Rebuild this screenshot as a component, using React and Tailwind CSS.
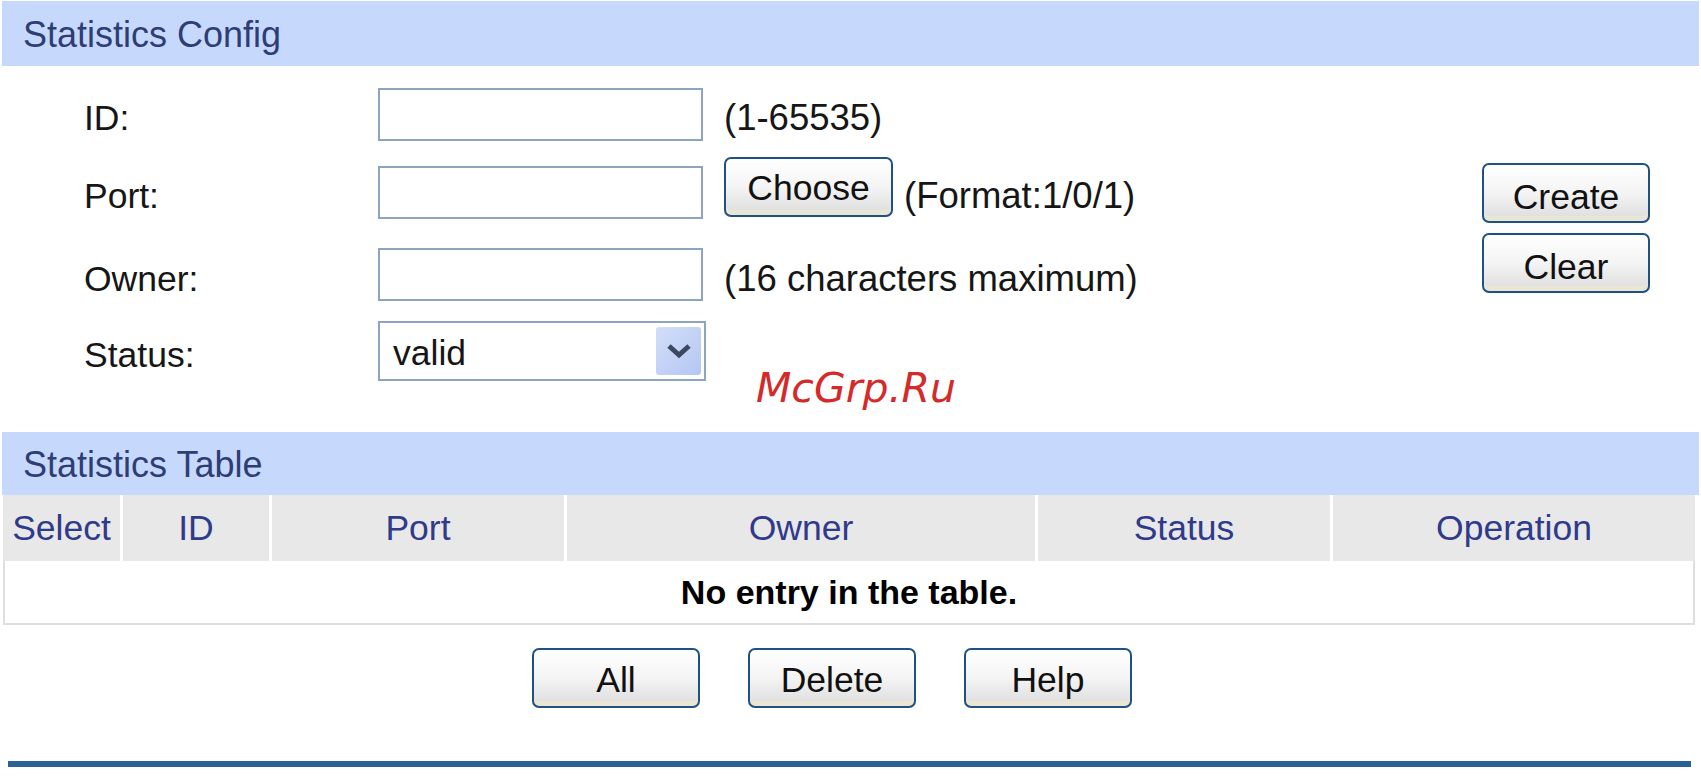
import React from "react";

const columns = [
  { name: "Select", w: "w-[120px]" },
  { name: "ID", w: "w-[149px]" },
  { name: "Port", w: "w-[295px]" },
  { name: "Owner", w: "w-[471px]" },
  { name: "Status", w: "w-[295px]" },
  { name: "Operation", w: "flex-1" },
];

// old-style web UI button with the dark blue rounded frame
function Btn({ children, className = "" }) {
  return (
    <button
      className={`h-[60px] w-[168px] rounded-[7px] border-2 border-[#1f5283] bg-linear-to-b from-white via-[#f4f4f4] to-[#dcdcdc] text-[35.5px] leading-[40px] text-[#111] shadow-[inset_0_-5px_0_#e9e6d6] ${className}`}
    >
      {children}
    </button>
  );
}

function TextInput({ className = "" }) {
  return <input type="text" className={`h-[53px] w-[325px] border-2 border-[#8da3be] bg-white outline-none ${className}`} />;
}

function SectionHeader({ title, className = "" }) {
  return (
    <div className={`mx-[2px] flex items-center bg-[#c6d9fd] pl-[21px] text-[36px] text-[#2f3d75] ${className}`}>
      {title}
    </div>
  );
}

export default function App() {
  return (
    <div className="relative min-h-screen w-[1701px] bg-white pt-px font-['Liberation_Sans',Arial,sans-serif] text-[35.5px] leading-[40px] text-[#161616]">
      <SectionHeader title="Statistics Config" className="h-[65px] pt-[2px]" />

      {/* Config form */}
      <div className="flex">
        <div className="flex flex-col">
          <div className="mt-[22px] flex h-[53px] items-center">
            <div className="w-[378px] pl-[84px] pt-[6px]">ID:</div>
            <TextInput />
            <div className="ml-[21px] pt-[6px] text-[36.5px]">(1-65535)</div>
          </div>

          <div className="mt-[16px] flex h-[60px] items-start">
            <div className="mt-[19px] w-[378px] pl-[84px]">Port:</div>
            <TextInput className="mt-[9px]" />
            <Btn className="ml-[21px] w-[169px] pt-[2px]">Choose</Btn>
            <div className="ml-[11px] mt-[19px] text-[36.5px]">(Format:1/0/1)</div>
          </div>

          <div className="mt-[31px] flex h-[53px] items-center">
            <div className="w-[378px] pl-[84px] pt-[8px]">Owner:</div>
            <TextInput />
            <div className="ml-[21px] pt-[8px] text-[36.5px]">(16 characters maximum)</div>
          </div>

          <div className="mt-[20px] flex h-[60px] items-center">
            <div className="w-[378px] pl-[84px] pt-[7px]">Status:</div>
            <div className="flex h-[60px] w-[328px] items-center justify-between border-2 border-[#8da3be] bg-white pl-[13px] pr-[3px]">
              <span className="pt-[4px]">valid</span>
              <div className="flex h-[48px] w-[45px] items-center justify-center rounded-[3px] bg-linear-to-br from-[#d3def8] to-[#b4c7f3]">
                <svg width="26" height="18" viewBox="0 0 26 18">
                  <polyline points="3,4 13,13 23,4" fill="none" stroke="#3b4763" strokeWidth="5" />
                </svg>
              </div>
            </div>
          </div>
        </div>

        <div className="ml-auto mr-[51px] mt-[97px] flex flex-col gap-[10px]">
          <Btn className="pt-[8px]">Create</Btn>
          <Btn className="pt-[8px]">Clear</Btn>
        </div>
      </div>

      {/* watermark */}
      <div className="absolute left-[756px] top-[364px] font-['DejaVu_Sans',sans-serif] text-[41px] italic leading-[48px] text-[#d42a2a]">
        McGrp.Ru
      </div>

      <SectionHeader title="Statistics Table" className="mt-[51px] h-[63px] pt-[2px]" />

      {/* Statistics table */}
      <div className="ml-[3px] mr-[6px]">
        <div className="flex h-[66px] bg-[#e8e8e8] text-[#2f3a8c]">
          {columns.map((c, i) => (
            <div
              key={c.name}
              className={`${c.w} flex items-center justify-center ${i < columns.length - 1 ? "border-r-[3px] border-white" : ""}`}
            >
              {c.name}
            </div>
          ))}
        </div>
        <div className="flex h-[64px] items-center justify-center border-2 border-t-0 border-[#dfdfdf] text-[34px] font-bold text-black">
          No entry in the table.
        </div>
      </div>

      <div className="mt-[23px] flex gap-[48px] pl-[532px]">
        <Btn className="pt-[4px]">All</Btn>
        <Btn className="pt-[4px]">Delete</Btn>
        <Btn className="pt-[4px]">Help</Btn>
      </div>

      <div className="ml-[8px] mr-[10px] mt-[53px] h-[6px] bg-[#2a6294]" />
    </div>
  );
}
